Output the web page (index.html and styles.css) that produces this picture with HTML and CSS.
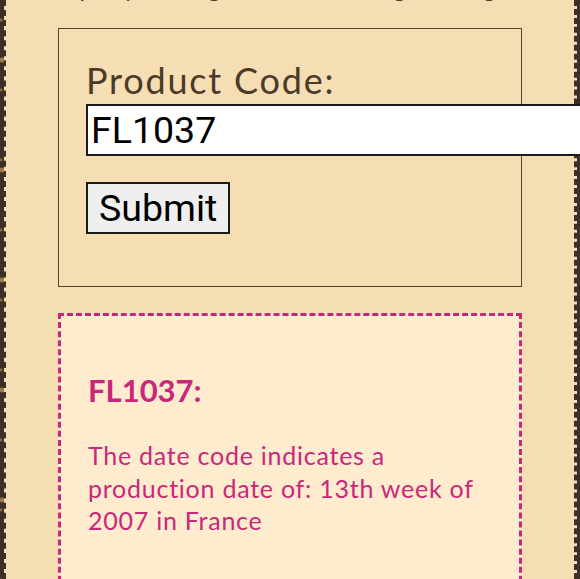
FILE: index.html
```html
<!DOCTYPE html>
<html lang="en">
<head>
<meta charset="utf-8">
<title>Date Code Checker</title>
<link rel="stylesheet" href="styles.css">
</head>
<body>
  <main class="page">
    <p class="intro">Input your bag's date code to get its age</p>
    <form class="code-form">
      <label class="code-label" for="code">Product Code:</label>
      <input class="code-input" id="code" type="text" value="FL1037">
      <button class="submit-btn" type="button">Submit</button>
    </form>
    <section class="result">
      <h2 class="result-title">FL1037:</h2>
      <p class="result-text">The date code indicates a production date of: 13th week of 2007 in France</p>
    </section>
  </main>
</body>
</html>
```
FILE: styles.css
```css
html, body {
  margin: 0;
  padding: 0;
}
body {
  background-color: #3d2f25;
  background-image:
    radial-gradient(circle at 2px 60px, #9c7b4e 2px, transparent 3px),
    radial-gradient(circle at 1px 20px, #8a6b43 1px, transparent 2px);
  background-size: 580px 110px, 580px 70px;
  padding: 0 3px 0 4px;
  height: 579px;
  overflow: hidden;
  box-sizing: border-box;
  font-family: "Lato", "Open Sans", sans-serif;
}
.page {
  display: flow-root;
  background: #f5deb3;
  border-left: 2px dashed #3d2f25;
  border-right: 3px dashed #3d2f25;
  padding: 0 52px;
  height: 100%;
  box-sizing: border-box;
}
.intro {
  margin: -28px 0 24px 0;
  font-size: 24px;
  line-height: 32px;
  letter-spacing: 0.8px;
  color: #4b3a29;
  white-space: nowrap;
}
.code-form {
  border: 1px solid #5a4630;
  padding: 29px 27px 52px 27px;
  margin: 0;
}
.code-label {
  display: block;
  font-size: 36px;
  line-height: 44px;
  letter-spacing: 1.8px;
  color: #4b3a29;
  margin-bottom: 2px;
}
.code-input {
  display: block;
  box-sizing: border-box;
  width: 520px;
  height: 52px;
  margin: 0;
  padding: 3px 3px;
  border: 2px solid #1a1a1a;
  background: #fff;
  font-family: "Roboto", sans-serif;
  font-size: 37.5px;
  color: #000;
}
.submit-btn {
  display: block;
  box-sizing: border-box;
  margin-top: 26px;
  height: 52px;
  padding: 0 11px;
  border: 2px solid #1a1a1a;
  border-radius: 0;
  background: #efefef;
  font-family: "Roboto", sans-serif;
  font-size: 37.5px;
  color: #000;
}
.result {
  margin-top: 26px;
  border: 3px dashed #c8287c;
  background: #ffebcd;
  padding: 54px 27px 60px 27px;
  color: #c8287c;
}
.result-title {
  margin: 0;
  font-size: 31px;
  line-height: 40px;
  font-weight: 700;
}
.result-text {
  margin: 29px 0 0 0;
  font-size: 25px;
  line-height: 32.5px;
  letter-spacing: 0.75px;
}
```
